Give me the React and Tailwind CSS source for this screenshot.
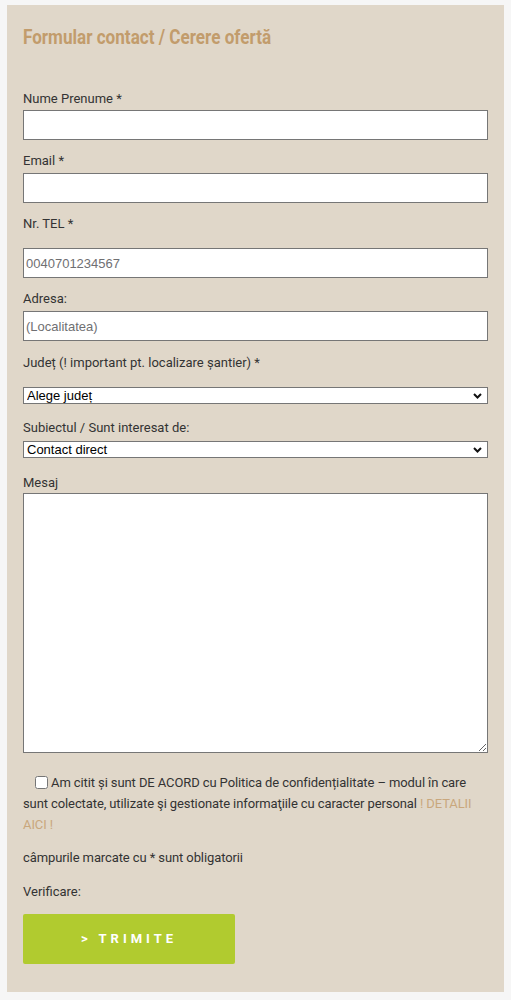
import React from "react";

function Label({ children, className = "" }) {
  return (
    <div className={"text-[13px] leading-[18px] text-[#333333] " + className}>{children}</div>
  );
}

function TextInput({ placeholder, className = "" }) {
  return (
    <input
      type="text"
      placeholder={placeholder}
      className={
        "block w-full h-[30px] border border-[#767676] bg-white px-[2px] text-[13px] text-[#333] placeholder:text-[#6f6f72] outline-none " +
        className
      }
    />
  );
}

function Select({ value, className = "" }) {
  return (
    <div className={"relative " + className}>
      <select
        defaultValue={value}
        className="block w-full h-[17px] appearance-none border border-[#767676] bg-white pl-[3px] text-[13px] leading-[15px] text-black outline-none"
      >
        <option>{value}</option>
      </select>
      <svg
        className="pointer-events-none absolute right-[6px] top-[6px]"
        width="9"
        height="6"
        viewBox="0 0 9 6"
      >
        <path d="M1 1 L4.5 4.5 L8 1" fill="none" stroke="#111" strokeWidth="2" />
      </svg>
    </div>
  );
}

export default function App() {
  const body = { fontFamily: "Roboto, 'Liberation Sans', Arial, sans-serif" };
  const field = { fontFamily: "'Liberation Sans', Arial, sans-serif" };
  return (
    <div className="min-h-[1000px] bg-[#f6f6f6] pt-[5px] pb-[8px]" style={body}>
      <div className="mx-[7px] bg-[#e0d7c9] px-4 pt-[20px] pb-[28px]">
        <h2 className="text-[20px] leading-[24px] font-bold text-[#c29c6c] origin-left scale-x-[0.855] whitespace-nowrap">
          Formular contact / Cerere ofertă
        </h2>

        <Label className="mt-[41px]">Nume Prenume *</Label>
        <div style={field} className="mt-[2px]">
          <TextInput />
        </div>

        <Label className="mt-[12px]">Email *</Label>
        <div style={field} className="mt-[3px]">
          <TextInput />
        </div>

        <Label className="mt-[12px]">Nr. TEL *</Label>
        <div style={field} className="mt-[15px]">
          <TextInput placeholder="0040701234567" />
        </div>

        <Label className="mt-[12px]">Adresa:</Label>
        <div style={field} className="mt-[3px]">
          <TextInput placeholder="(Localitatea)" />
        </div>

        <Label className="mt-[13px]">Județ (! important pt. localizare șantier) *</Label>
        <div style={field} className="mt-[15px]">
          <Select value="Alege județ" />
        </div>

        <Label className="mt-[15px]">Subiectul / Sunt interesat de:</Label>
        <div style={field} className="mt-[4px]">
          <Select value="Contact direct" />
        </div>

        <Label className="mt-[16px]">Mesaj</Label>
        <div style={field} className="mt-[1px]">
          <textarea className="block w-full h-[260px] border border-[#767676] bg-white outline-none" />
        </div>

        <p className="mt-[19px] text-[13px] leading-[21px] tracking-[-0.1px] text-[#333]">
          <span className="inline-block w-[12px]"></span>
          <input type="checkbox" className="m-0 mr-[3px] align-[-2px] h-[13px] w-[13px]" />
          Am citit și sunt DE ACORD cu Politica de confidențialitate – modul în care sunt colectate,
          utilizate şi gestionate informaţiile cu caracter personal{" "}
          <span className="text-[#c9a77d]">! DETALII AICI !</span>
        </p>

        <p className="mt-[12px] text-[13px] leading-[21px] tracking-[-0.1px] text-[#333]">
          câmpurile marcate cu * sunt obligatorii
        </p>

        <p className="mt-[13px] text-[13px] leading-[21px] text-[#333]">Verificare:</p>

        <button
          type="button"
          className="mt-[12px] flex h-[50px] w-[212px] items-center justify-center rounded-[2px] bg-[#b1cb2f] text-[13px] font-bold tracking-[4px] text-white"
        >
          &gt; TRIMITE
        </button>
      </div>
    </div>
  );
}
